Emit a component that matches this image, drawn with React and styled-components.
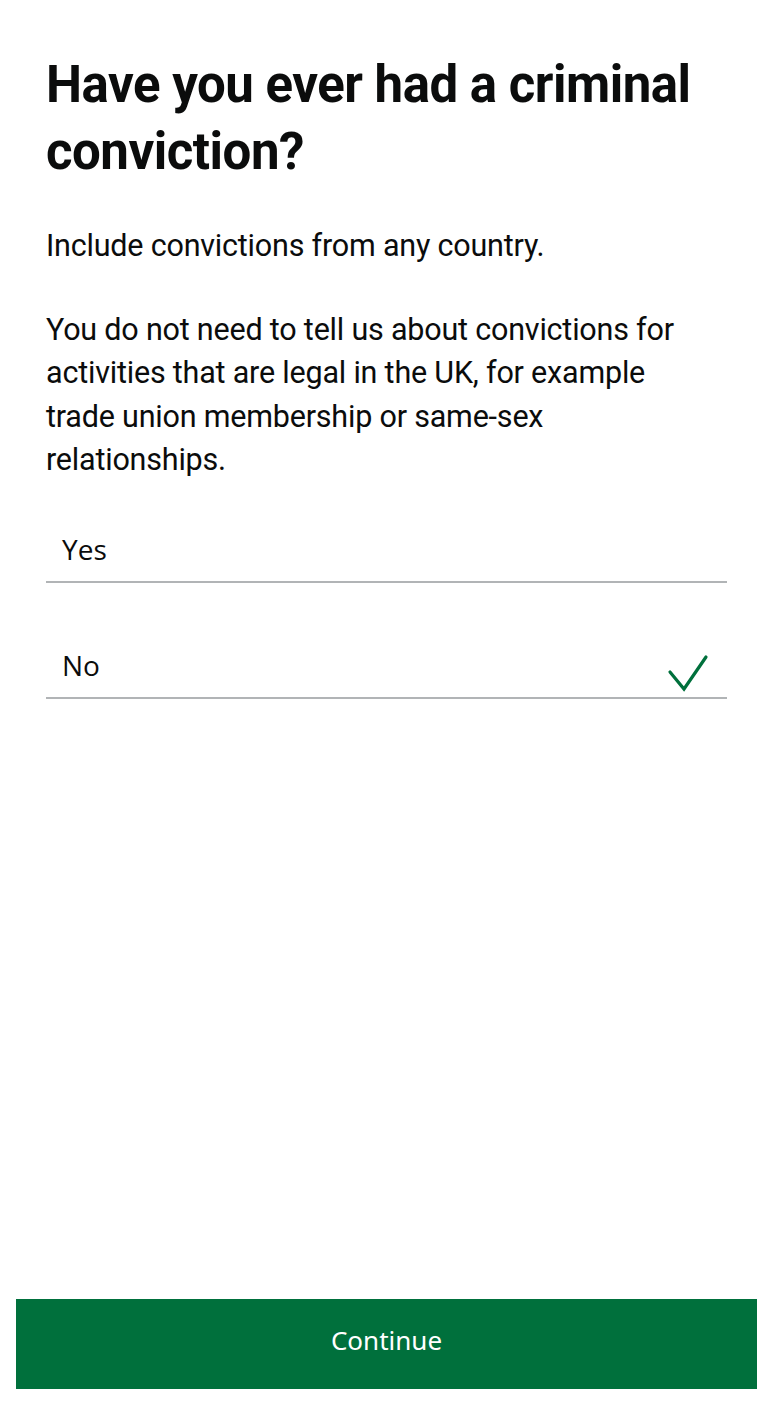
import React, { useState } from "react";
import styled, { createGlobalStyle } from "styled-components";

const Global = createGlobalStyle`
  html, body { margin: 0; padding: 0; background: #ffffff; }
  body { font-family: "Noto Sans", Roboto, Arial, sans-serif; color: #0b0c0c; }
  * { box-sizing: border-box; }
`;

const Page = styled.div`
  min-height: 1412px;
  display: flex;
  flex-direction: column;
`;

const Content = styled.main`
  flex: 1;
  padding: 51px 46px 0 46px;
`;

const Heading = styled.h1`
  margin: 0 0 39px 0;
  font-family: Roboto, "Noto Sans", Arial, sans-serif;
  font-weight: 700;
  font-size: 51px;
  line-height: 67px;
  letter-spacing: -0.5px;
  color: #0b0c0c;
`;

const Body = styled.p`
  margin: 0 0 ${(p) => p.$gap || 0}px 0;
  max-width: 664px;
  font-family: Roboto, "Noto Sans", Arial, sans-serif;
  font-size: 30.5px;
  line-height: 43.5px;
  letter-spacing: -0.2px;
  color: #0b0c0c;
`;

const Options = styled.div`
  display: flex;
  flex-direction: column;
  margin-top: 23px;
  width: 681px;
`;

const Option = styled.button`
  all: unset;
  box-sizing: border-box;
  display: flex;
  align-items: flex-end;
  justify-content: space-between;
  height: ${(p) => (p.$first ? 78 : 116)}px;
  padding: 0 18px 12px 16px;
  border-bottom: 2px solid #b1b4b6;
  cursor: pointer;
  font-family: "Open Sans", "Noto Sans", Arial, sans-serif;
  font-size: 28px;
  line-height: 40px;
  color: #0b0c0c;
`;

const Label = styled.span`
  padding-bottom: 0;
`;

const Check = styled.svg`
  width: 42px;
  height: 40px;
  margin-bottom: -9px;
`;

const Footer = styled.footer`
  padding: 0 16px 23px 16px;
`;

const ContinueButton = styled.button`
  width: 100%;
  height: 90px;
  padding: 0 0 8px 0;
  border: none;
  background: #00703c;
  color: #ffffff;
  font-family: "Noto Sans", "Open Sans", Arial, sans-serif;
  font-size: 26px;
  cursor: pointer;
`;

export default function App() {
  const [choice, setChoice] = useState("No");
  return (
    <Page>
      <Global />
      <Content>
        <Heading>Have you ever had a criminal conviction?</Heading>
        <Body $gap={40}>Include convictions from any country.</Body>
        <Body>
          You do not need to tell us about convictions for activities that are
          legal in the UK, for example trade union membership or same-sex
          relationships.
        </Body>
        <Options>
          {["Yes", "No"].map((o, i) => (
            <Option key={o} $first={i === 0} onClick={() => setChoice(o)}>
              <Label>{o}</Label>
              {choice === o && (
                <Check viewBox="0 0 42 40">
                  <polyline
                    points="3,18 17,35 39,3"
                    fill="none"
                    stroke="#00703c"
                    strokeWidth="3.2"
                    strokeLinecap="round"
                    strokeLinejoin="miter"
                  />
                </Check>
              )}
            </Option>
          ))}
        </Options>
      </Content>
      <Footer>
        <ContinueButton>Continue</ContinueButton>
      </Footer>
    </Page>
  );
}
